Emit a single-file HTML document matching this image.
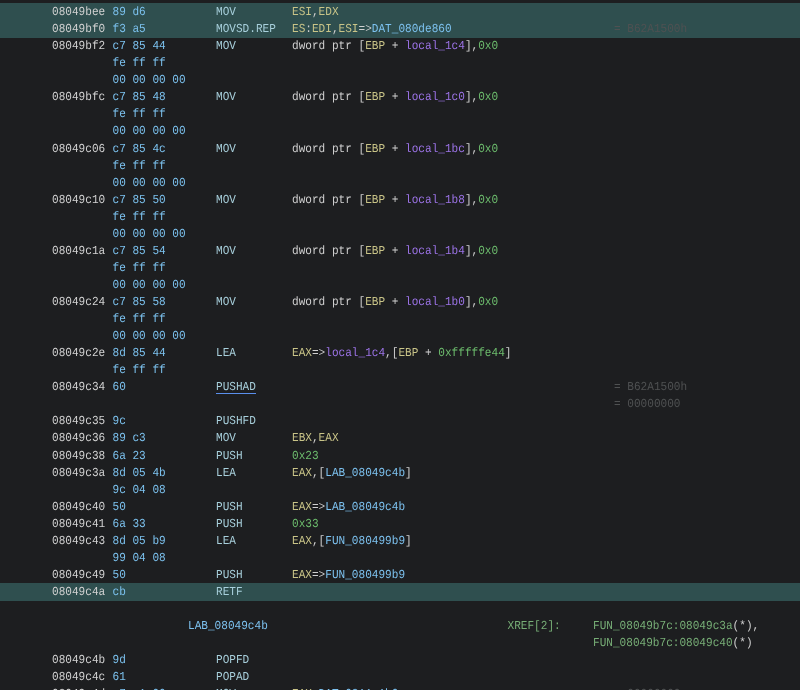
<!DOCTYPE html>
<html><head><meta charset="utf-8"><style>
html,body{margin:0;padding:0;width:800px;height:690px;overflow:hidden;background:#1d1e20;}
body{position:relative;will-change:transform;text-rendering:geometricPrecision;font-family:"Liberation Mono",monospace;font-size:11.08px;letter-spacing:0.0px;}
.hl{position:absolute;left:0;width:800px;background:#2f4f4f;}
.r{position:absolute;left:0;width:800px;height:17px;line-height:17px;white-space:pre;transform:scale(1.0,1.1);transform-origin:0 12.0px;-webkit-text-stroke:0.0px currentColor;}
.r s{position:absolute;top:0;text-decoration:none;white-space:pre;}
.r i{font-style:normal;}
.a{color:#d2d2d2}
.b{color:#7cc2ef}
.m{color:#a8d0dc}
.ul{position:absolute;background:#5a8fec;}
.w{color:#d0d0d0}
.y{color:#c9c488}
.p{color:#9d74e8}
.g{color:#6dbd6d}
.l{color:#7dc2f0}
.x{color:#77ae76}
.c{color:#4f5152}
</style></head><body>
<div class="hl" style="top:2.62px;height:18.10px"></div>
<div class="hl" style="top:19.67px;height:18.10px"></div>
<div class="ul" style="top:393.00px;left:215.8px;width:39.89px;height:1.2px"></div>
<div class="hl" style="top:583.00px;height:18.00px"></div>
<div class="r" style="top:5.07px"><s class="a" style="left:52px">08049bee</s><s class="b" style="left:112.5px">89 d6</s><s class="m" style="left:216px">MOV</s><s style="left:292px"><i class="y">ESI</i><i class="w">,</i><i class="y">EDX</i></s></div>
<div class="r" style="top:22.12px"><s class="a" style="left:52px">08049bf0</s><s class="b" style="left:112.5px">f3 a5</s><s class="m" style="left:216px">MOVSD.REP</s><s style="left:292px"><i class="y">ES</i><i class="w">:</i><i class="y">EDI</i><i class="w">,</i><i class="y">ESI</i><i class="w">=&gt;</i><i class="l">DAT_080de860</i></s><s class="c" style="left:614px">= B62A1500h</s></div>
<div class="r" style="top:39.18px"><s class="a" style="left:52px">08049bf2</s><s class="b" style="left:112.5px">c7 85 44</s><s class="m" style="left:216px">MOV</s><s style="left:292px"><i class="w">dword ptr [</i><i class="y">EBP</i><i class="w"> + </i><i class="p">local_1c4</i><i class="w">],</i><i class="g">0x0</i></s></div>
<div class="r" style="top:56.23px"><s class="b" style="left:112.5px">fe ff ff</s></div>
<div class="r" style="top:73.29px"><s class="b" style="left:112.5px">00 00 00 00</s></div>
<div class="r" style="top:90.35px"><s class="a" style="left:52px">08049bfc</s><s class="b" style="left:112.5px">c7 85 48</s><s class="m" style="left:216px">MOV</s><s style="left:292px"><i class="w">dword ptr [</i><i class="y">EBP</i><i class="w"> + </i><i class="p">local_1c0</i><i class="w">],</i><i class="g">0x0</i></s></div>
<div class="r" style="top:107.40px"><s class="b" style="left:112.5px">fe ff ff</s></div>
<div class="r" style="top:124.45px"><s class="b" style="left:112.5px">00 00 00 00</s></div>
<div class="r" style="top:141.51px"><s class="a" style="left:52px">08049c06</s><s class="b" style="left:112.5px">c7 85 4c</s><s class="m" style="left:216px">MOV</s><s style="left:292px"><i class="w">dword ptr [</i><i class="y">EBP</i><i class="w"> + </i><i class="p">local_1bc</i><i class="w">],</i><i class="g">0x0</i></s></div>
<div class="r" style="top:158.56px"><s class="b" style="left:112.5px">fe ff ff</s></div>
<div class="r" style="top:175.62px"><s class="b" style="left:112.5px">00 00 00 00</s></div>
<div class="r" style="top:192.67px"><s class="a" style="left:52px">08049c10</s><s class="b" style="left:112.5px">c7 85 50</s><s class="m" style="left:216px">MOV</s><s style="left:292px"><i class="w">dword ptr [</i><i class="y">EBP</i><i class="w"> + </i><i class="p">local_1b8</i><i class="w">],</i><i class="g">0x0</i></s></div>
<div class="r" style="top:209.73px"><s class="b" style="left:112.5px">fe ff ff</s></div>
<div class="r" style="top:226.78px"><s class="b" style="left:112.5px">00 00 00 00</s></div>
<div class="r" style="top:243.84px"><s class="a" style="left:52px">08049c1a</s><s class="b" style="left:112.5px">c7 85 54</s><s class="m" style="left:216px">MOV</s><s style="left:292px"><i class="w">dword ptr [</i><i class="y">EBP</i><i class="w"> + </i><i class="p">local_1b4</i><i class="w">],</i><i class="g">0x0</i></s></div>
<div class="r" style="top:260.89px"><s class="b" style="left:112.5px">fe ff ff</s></div>
<div class="r" style="top:277.95px"><s class="b" style="left:112.5px">00 00 00 00</s></div>
<div class="r" style="top:295.00px"><s class="a" style="left:52px">08049c24</s><s class="b" style="left:112.5px">c7 85 58</s><s class="m" style="left:216px">MOV</s><s style="left:292px"><i class="w">dword ptr [</i><i class="y">EBP</i><i class="w"> + </i><i class="p">local_1b0</i><i class="w">],</i><i class="g">0x0</i></s></div>
<div class="r" style="top:312.06px"><s class="b" style="left:112.5px">fe ff ff</s></div>
<div class="r" style="top:329.12px"><s class="b" style="left:112.5px">00 00 00 00</s></div>
<div class="r" style="top:346.17px"><s class="a" style="left:52px">08049c2e</s><s class="b" style="left:112.5px">8d 85 44</s><s class="m" style="left:216px">LEA</s><s style="left:292px"><i class="y">EAX</i><i class="w">=&gt;</i><i class="p">local_1c4</i><i class="w">,[</i><i class="y">EBP</i><i class="w"> + </i><i class="g">0xfffffe44</i><i class="w">]</i></s></div>
<div class="r" style="top:363.22px"><s class="b" style="left:112.5px">fe ff ff</s></div>
<div class="r" style="top:380.28px"><s class="a" style="left:52px">08049c34</s><s class="b" style="left:112.5px">60</s><s class="m" style="left:216px">PUSHAD</s><s class="c" style="left:614px">= B62A1500h</s></div>
<div class="r" style="top:397.33px"><s class="c" style="left:614px">= 00000000</s></div>
<div class="r" style="top:414.39px"><s class="a" style="left:52px">08049c35</s><s class="b" style="left:112.5px">9c</s><s class="m" style="left:216px">PUSHFD</s></div>
<div class="r" style="top:431.44px"><s class="a" style="left:52px">08049c36</s><s class="b" style="left:112.5px">89 c3</s><s class="m" style="left:216px">MOV</s><s style="left:292px"><i class="y">EBX</i><i class="w">,</i><i class="y">EAX</i></s></div>
<div class="r" style="top:448.50px"><s class="a" style="left:52px">08049c38</s><s class="b" style="left:112.5px">6a 23</s><s class="m" style="left:216px">PUSH</s><s style="left:292px"><i class="g">0x23</i></s></div>
<div class="r" style="top:465.56px"><s class="a" style="left:52px">08049c3a</s><s class="b" style="left:112.5px">8d 05 4b</s><s class="m" style="left:216px">LEA</s><s style="left:292px"><i class="y">EAX</i><i class="w">,[</i><i class="l">LAB_08049c4b</i><i class="w">]</i></s></div>
<div class="r" style="top:482.61px"><s class="b" style="left:112.5px">9c 04 08</s></div>
<div class="r" style="top:499.66px"><s class="a" style="left:52px">08049c40</s><s class="b" style="left:112.5px">50</s><s class="m" style="left:216px">PUSH</s><s style="left:292px"><i class="y">EAX</i><i class="w">=&gt;</i><i class="l">LAB_08049c4b</i></s></div>
<div class="r" style="top:516.72px"><s class="a" style="left:52px">08049c41</s><s class="b" style="left:112.5px">6a 33</s><s class="m" style="left:216px">PUSH</s><s style="left:292px"><i class="g">0x33</i></s></div>
<div class="r" style="top:533.78px"><s class="a" style="left:52px">08049c43</s><s class="b" style="left:112.5px">8d 05 b9</s><s class="m" style="left:216px">LEA</s><s style="left:292px"><i class="y">EAX</i><i class="w">,[</i><i class="l">FUN_080499b9</i><i class="w">]</i></s></div>
<div class="r" style="top:550.83px"><s class="b" style="left:112.5px">99 04 08</s></div>
<div class="r" style="top:567.88px"><s class="a" style="left:52px">08049c49</s><s class="b" style="left:112.5px">50</s><s class="m" style="left:216px">PUSH</s><s style="left:292px"><i class="y">EAX</i><i class="w">=&gt;</i><i class="l">FUN_080499b9</i></s></div>
<div class="r" style="top:584.94px"><s class="a" style="left:52px">08049c4a</s><s class="b" style="left:112.5px">cb</s><s class="m" style="left:216px">RETF</s></div>
<div class="r" style="top:619.05px"><s class="l" style="left:188px">LAB_08049c4b</s><s class="x" style="left:507.5px">XREF[2]:</s><s style="left:593px"><i class="x">FUN_08049b7c:08049c3a</i><i class="w">(*),</i></s></div>
<div class="r" style="top:636.11px"><s style="left:593px"><i class="x">FUN_08049b7c:08049c40</i><i class="w">(*)</i></s></div>
<div class="r" style="top:653.16px"><s class="a" style="left:52px">08049c4b</s><s class="b" style="left:112.5px">9d</s><s class="m" style="left:216px">POPFD</s></div>
<div class="r" style="top:670.22px"><s class="a" style="left:52px">08049c4c</s><s class="b" style="left:112.5px">61</s><s class="m" style="left:216px">POPAD</s></div>
<div class="r" style="top:687.27px"><s class="a" style="left:52px">08049c4d</s><s class="b" style="left:112.5px">c7 c1 00</s><s class="m" style="left:216px">MOV</s><s style="left:292px"><i class="y">EAX</i><i class="w">,</i><i class="l">DAT_0811a1b0</i></s><s class="c" style="left:614px">= 00000000</s></div>
</body></html>
